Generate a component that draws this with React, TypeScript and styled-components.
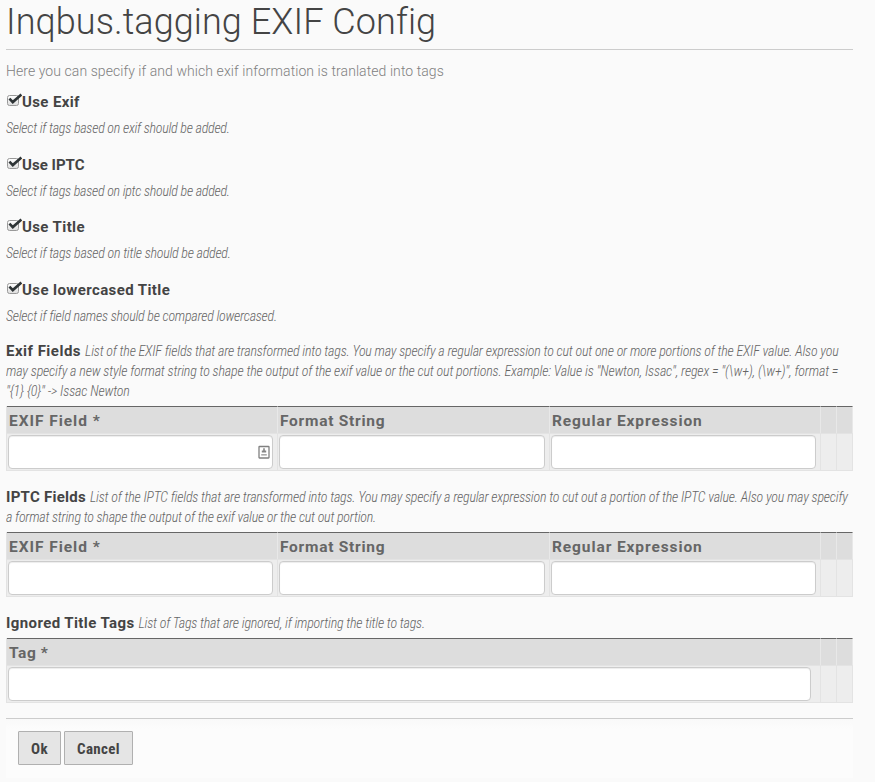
import React from "react";
import styled, { createGlobalStyle } from "styled-components";

const GlobalStyle = createGlobalStyle`
  * { box-sizing: border-box; }
  body { margin: 0; background: #fafafa; font-family: Roboto, "Liberation Sans", sans-serif; color: #4c4c4c; }
`;

const Page = styled.main`
  width: 847px;
  margin-left: 6px;
  height: 782px;
  overflow: hidden;
`;

const Title = styled.h1`
  margin: 0;
  height: 50px;
  border-bottom: 1px solid #ccc;
  font-size: 36px;
  line-height: 45px;
  font-weight: 300;
  letter-spacing: 0.08px;
  color: #444;
  white-space: nowrap;
`;

const Lead = styled.p`
  margin: 11px 0 10px;
  font-size: 14px;
  line-height: 20px;
  font-weight: 300;
  letter-spacing: 0.07px;
  color: #808080;
  white-space: nowrap;
`;

const Option = styled.div<{ $height: number }>`
  height: ${(p) => p.$height}px;
`;

const OptionLabel = styled.label`
  display: flex;
  height: 20px;
  align-items: flex-start;
`;

const CheckIcon = styled.svg`
  width: 16px;
  height: 16px;
  flex: none;
`;

const Strong = styled.strong<{ $spacing: number; $drop?: number }>`
  padding-top: ${(p) => p.$drop ?? 0}px;
  font-size: 15px;
  line-height: 20px;
  font-weight: 700;
  letter-spacing: ${(p) => p.$spacing}px;
  color: #444;
  white-space: nowrap;
`;

const Help = styled.span<{ $spacing: number }>`
  font-family: "Roboto Condensed", Roboto, sans-serif;
  font-size: 14px;
  line-height: 20px;
  font-weight: 300;
  font-style: italic;
  letter-spacing: ${(p) => p.$spacing}px;
  color: #666;
  white-space: nowrap;
`;

const OptionHelp = styled.div`
  display: flex;
  margin-top: 7px;
`;

const Field = styled.section`
  margin-bottom: 16px;

  &:last-of-type {
    margin-bottom: 15px;
  }
`;

const Line = styled.div`
  display: flex;
  gap: 4px;
  height: 20px;
`;

const Grid = styled.div<{ $columns: string }>`
  display: grid;
  grid-template-columns: ${(p) => p.$columns};
  margin-top: 5px;
  border-left: 1px solid #e3e3e3;
`;

const HeadCell = styled.div<{ $spacing?: number }>`
  height: 27px;
  padding: 4px 0 0 2px;
  border-top: 1px solid #666;
  border-right: 1px solid #e8e8e8;
  background: #ddd;
  color: #666;
  font-size: 15.5px;
  line-height: 20px;
  font-weight: 700;
  letter-spacing: ${(p) => p.$spacing ?? 0}px;
  white-space: nowrap;
`;

const BodyCell = styled.div`
  display: flex;
  height: 38px;
  padding: 1px 0 0 1px;
  border: solid #e3e3e3;
  border-width: 1px 1px 1px 0;
  background: #ededed;
`;

const Input = styled.div<{ $width: number }>`
  display: flex;
  align-items: center;
  justify-content: flex-end;
  width: ${(p) => p.$width}px;
  height: 34px;
  padding-right: 2px;
  border: 1px solid #ccc;
  border-radius: 4px;
  background: #fff;
  box-shadow: inset 0 1px 1px rgba(0, 0, 0, 0.075);
`;

const Controls = styled.div`
  display: flex;
  gap: 3px;
  height: 60px;
  padding: 12px 12px 0;
  border-top: 1px solid #ccc;
  background: linear-gradient(#f9f9f9, #fcfcfc 10px);
`;

const Button = styled.button<{ $width: number }>`
  width: ${(p) => p.$width}px;
  height: 34px;
  padding: 2px 0 0;
  border: 1px solid #b0b0b0;
  border-radius: 1px;
  background: #e5e5e5;
  color: #444;
  font: 700 15px/20px "Roboto Condensed", Roboto, sans-serif;
  letter-spacing: 0.35px;
`;

function Check() {
  return (
    <CheckIcon viewBox="0 0 16 16">
      <defs>
        <linearGradient id="box" x1="0" y1="0" x2="0" y2="1">
          <stop offset="0" stopColor="#fff" />
          <stop offset="1" stopColor="#ddd" />
        </linearGradient>
      </defs>
      <rect x="1.5" y="4.5" width="11" height="10" rx="2" fill="url(#box)" stroke="#999" />
      <path d="M3.4 7.6 6.8 11.1 15.4 3.6" fill="none" stroke="#2e3436" strokeWidth="2.6" />
    </CheckIcon>
  );
}

function ContactIcon() {
  return (
    <svg width="12" height="14" viewBox="0 0 12 14">
      <rect x="1" y="1.5" width="10" height="11.5" rx="0.5" fill="#fff" stroke="#808080" strokeWidth="1.3" />
      <path d="M5.2 3.2h1.6v2.2h1.4v2H3.8v-2h1.4z" fill="#858585" />
      <path d="M3.2 9h5.6v1.6H3.2z" fill="#aaa" />
    </svg>
  );
}

const options = [
  { label: "Use Exif", ls: 0.38, help: "Select if tags based on exif should be added.", hs: -0.26, height: 63 },
  { label: "Use IPTC", ls: 0.02, help: "Select if tags based on iptc should be added.", hs: -0.27, height: 62 },
  { label: "Use Title", ls: 0.39, help: "Select if tags based on title should be added.", hs: -0.25, height: 63 },
  { label: "Use lowercased Title", ls: 0.4, help: "Select if field names should be compared lowercased.", hs: -0.25, height: 62 },
];

function Table({ icon }: { icon?: boolean }) {
  return (
    <Grid $columns="271px 272px 271px 16px 16px">
      <HeadCell $spacing={0.96}>EXIF Field *</HeadCell>
      <HeadCell $spacing={0.74}>Format String</HeadCell>
      <HeadCell $spacing={0.9}>Regular Expression</HeadCell>
      <HeadCell />
      <HeadCell />
      <BodyCell><Input $width={265}>{icon && <ContactIcon />}</Input></BodyCell>
      <BodyCell><Input $width={266} /></BodyCell>
      <BodyCell><Input $width={265} /></BodyCell>
      <BodyCell />
      <BodyCell />
    </Grid>
  );
}

export default function App() {
  return (
    <>
      <GlobalStyle />
      <Page>
        <Title>Inqbus.tagging EXIF Config</Title>
        <Lead>Here you can specify if and which exif information is tranlated into tags</Lead>
        {options.map((o) => (
          <Option key={o.label} $height={o.height}>
            <OptionLabel>
              <Check />
              <Strong $spacing={o.ls} $drop={1}>{o.label}</Strong>
            </OptionLabel>
            <OptionHelp>
              <Help $spacing={o.hs}>{o.help}</Help>
            </OptionHelp>
          </Option>
        ))}
        <Field>
          <Line>
            <Strong $spacing={0.5}>Exif Fields</Strong>
            <Help $spacing={-0.208}>List of the EXIF fields that are transformed into tags. You may specify a regular expression to cut out one or more portions of the EXIF value. Also you</Help>
          </Line>
          <Line><Help $spacing={-0.18}>may specify a new style format string to shape the output of the exif value or the cut out portions. Example: Value is "Newton, Issac", regex = "(\w+), (\w+)", format =</Help></Line>
          <Line><Help $spacing={-0.17}>{'"{1} {0}" -> Issac Newton'}</Help></Line>
          <Table icon />
        </Field>
        <Field>
          <Line>
            <Strong $spacing={0.26}>IPTC Fields</Strong>
            <Help $spacing={-0.213}>List of the IPTC fields that are transformed into tags. You may specify a regular expression to cut out a portion of the IPTC value. Also you may specify</Help>
          </Line>
          <Line><Help $spacing={-0.24}>a format string to shape the output of the exif value or the cut out portion.</Help></Line>
          <Table />
        </Field>
        <Field>
          <Line>
            <Strong $spacing={0.4}>Ignored Title Tags</Strong>
            <Help $spacing={-0.22}>List of Tags that are ignored, if importing the title to tags.</Help>
          </Line>
          <Grid $columns="814px 16px 16px">
            <HeadCell $spacing={0.6}>Tag *</HeadCell>
            <HeadCell />
            <HeadCell />
            <BodyCell><Input $width={803} /></BodyCell>
            <BodyCell />
            <BodyCell />
          </Grid>
        </Field>
        <Controls>
          <Button $width={43}>Ok</Button>
          <Button $width={69}>Cancel</Button>
        </Controls>
      </Page>
    </>
  );
}
